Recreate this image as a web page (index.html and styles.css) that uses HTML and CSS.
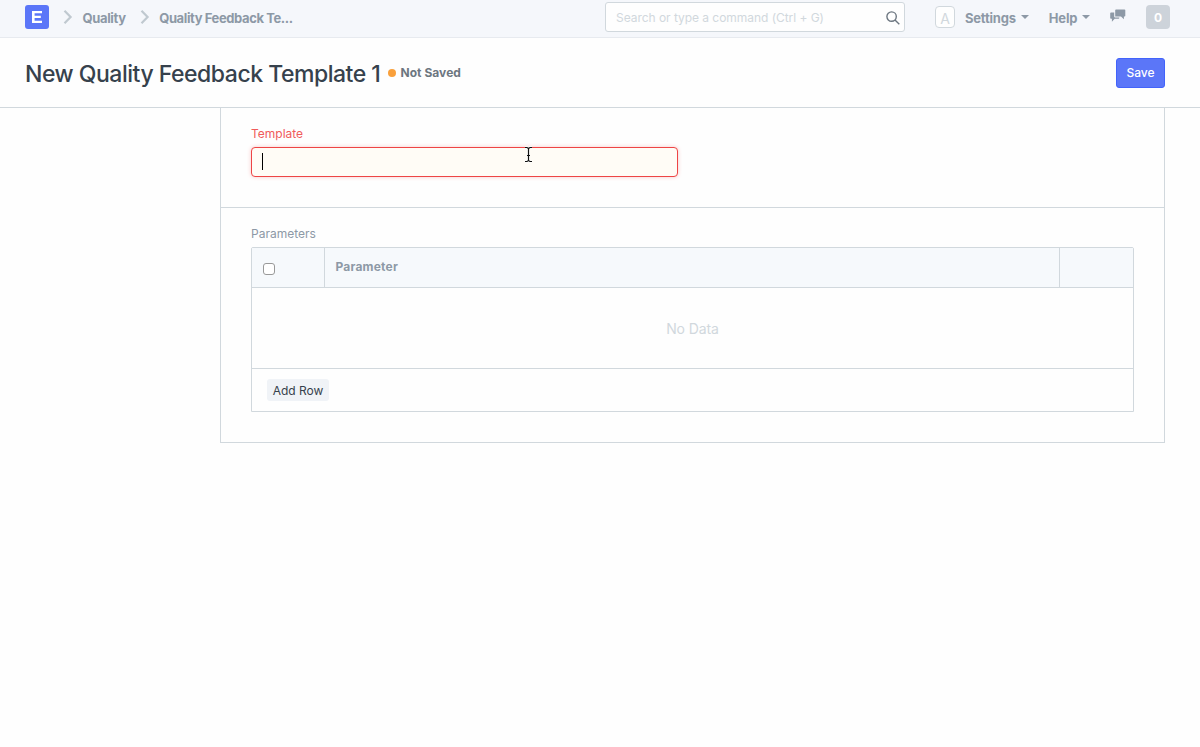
FILE: index.html
```html
<!DOCTYPE html>
<html lang="en">
<head>
<meta charset="utf-8">
<title>New Quality Feedback Template 1</title>
<link rel="stylesheet" href="styles.css">
</head>
<body>
<nav class="navbar">
  <div class="breadcrumbs">
    <a class="brand"><svg width="24" height="24" viewBox="0 0 24 24"><rect width="24" height="24" rx="3" fill="#5b76f8"/><path d="M7 6h10v2.300H9.600v2.500h6.200v2.300H9.600v2.600H17V18H7z" fill="#fff"/></svg></a>
    <svg class="chevron" width="10" height="16" viewBox="0 0 10 16"><path d="M1.500 1.800 7.600 8l-6.100 6.200"/></svg>
    <a class="crumb crumb-module">Quality</a>
    <svg class="chevron" width="10" height="16" viewBox="0 0 10 16"><path d="M1.500 1.800 7.600 8l-6.100 6.200"/></svg>
    <a class="crumb crumb-page">Quality Feedback Te...</a>
  </div>
  <div class="search">
    <span class="search-hint">Search or type a command (Ctrl + G)</span>
    <svg class="search-icon" width="14" height="14" viewBox="0 0 14 14"><circle cx="5.600" cy="5.600" r="4.700"/><path d="m9 9 4.300 4.300"/></svg>
  </div>
  <div class="tools">
    <span class="avatar">A</span>
    <a class="menu menu-settings">Settings</a><i class="caret"></i>
    <a class="menu menu-help">Help</a><i class="caret"></i>
    <svg class="chat" width="16" height="14" viewBox="0 0 16 14"><path d="M6 .5h8.500q.8 0 .8.8v5.400q0 .8-.8.8h-.6v2.800L11 7.500H5.200V1.300Q5.200.5 6 .5z"/><path d="M4.200 3.400H1q-.8 0-.8.8v4.700q0 .8.8.8h.9v3l2.800-3h3.800q.8 0 .8-.8v-.5H5.200q-1 0-1-1z"/></svg>
    <span class="count">0</span>
  </div>
</nav>
<header class="page-head">
  <h1 class="title">New Quality Feedback Template 1</h1>
  <i class="dot"></i>
  <span class="status">Not Saved</span>
  <button class="save">Save</button>
</header>
<main class="form">
  <section class="section">
    <label class="label label-required">Template</label>
    <div class="input"><i class="text-caret"></i>
      <svg class="pointer" width="9" height="17" viewBox="0 0 9 17"><path class="pointer-halo" d="M1 1.500h2l1.500 1L6 1.500h2M4.500 2v13M1 15.500h2l1.500-1 1.500 1h2M3 9.500h3"/><path class="pointer-line" d="M1 1.500h2l1.500 1L6 1.500h2M4.500 2v13M1 15.500h2l1.500-1 1.500 1h2M3 9.500h3"/></svg>
    </div>
  </section>
  <section class="section section-table">
    <label class="label label-table">Parameters</label>
    <div class="grid">
      <div class="grid-head">
        <div class="cell cell-check"><i class="checkbox"></i></div>
        <div class="cell cell-name"><span class="column-name">Parameter</span></div>
        <div class="cell cell-end"></div>
      </div>
      <div class="grid-empty"><span class="empty-text">No Data</span></div>
      <div class="grid-foot"><button class="add-row">Add Row</button></div>
    </div>
  </section>
</main>
</body>
</html>
```

FILE: styles.css
```css
* { box-sizing: border-box; }
body { margin: 0; height: 747px; overflow: hidden; background: #fefefe; font: 12px/18px Inter, "Liberation Sans", sans-serif; color: #36414c; }
svg { display: block; flex: none; }
button { font: inherit; margin: 0; padding: 0; white-space: nowrap; }
.navbar { display: flex; height: 38px; padding: 0 30px 4px 25px; align-items: center; background: #f5f7fb; border-bottom: 1px solid #e7eaef; color: #8d99a6; font-weight: 700; font-size: 13px; white-space: nowrap; }
.breadcrumbs { display: flex; align-items: center; width: 580px; }
.chevron { fill: none; stroke: #c0c9d0; stroke-width: 2.2; margin-left: 14px; }
.crumb { margin-left: 9.5px; padding-top: 2px; letter-spacing: -0.35px; }
.crumb-page { letter-spacing: -0.4px; }
.search { display: flex; align-items: center; justify-content: space-between; width: 300px; height: 30px; margin-top: 1px; padding: 0 4px 0 10px; background: #fefefe; border: 1px solid #d1d8dd; border-radius: 3px; }
.search-hint { padding-top: 2px; font-weight: 400; font-size: 12px; letter-spacing: -0.04px; color: #d1d8dd; }
.search-icon { fill: none; stroke: #6c7680; stroke-width: 1.4; margin-top: 2px; }
.tools { display: flex; align-items: center; margin-left: 30px; }
.avatar { width: 20px; height: 22px; border: 1px solid #d1d8dd; border-radius: 4px; background: #fefefe; color: #d1d8dd; font-weight: 400; font-size: 14px; line-height: 23px; text-align: center; }
.menu { margin-left: 10px; padding-top: 2px; letter-spacing: -0.2px; }
.menu-help { margin-left: 20px; }
.caret { border: 4px solid transparent; border-top-color: #8d99a6; border-bottom: 0; margin-left: 5px; }
.chat { fill: #8d99a6; margin-left: 20px; margin-top: -1px; }
.count { width: 24px; height: 24px; margin-left: auto; border-radius: 4px; background: #cdd3da; color: #fff; text-align: center; line-height: 26px; font-size: 12px; }
.tools { width: 235px; }
.page-head { display: flex; align-items: center; height: 70px; padding: 0 35px 0 25px; border-bottom: 1px solid #d1d8dd; background: #fefefe; }
.title { margin: 3px 0 0; font-size: 23px; line-height: 30px; font-weight: 500; letter-spacing: -0.48px; white-space: nowrap; }
.dot { width: 8px; height: 8px; margin-left: 8px; margin-top: 1px; border-radius: 50%; background: #f9a03c; }
.status { margin-left: 4px; font-weight: 700; letter-spacing: 0.05px; color: #6c7680; }
.save { width: 49px; height: 30px; margin-left: auto; margin-top: 1px; border: 1px solid #4263fb; border-radius: 3px; background: #5b76f8; color: #fff; font-weight: 500; }
.form { width: 945px; height: 335px; margin-left: 220px; border: solid #d1d8dd; border-width: 0 1px 1px; }
.section { height: 100px; padding: 17px 30px 0; border-bottom: 1px solid #d1d8dd; }
.section-table { height: auto; border: 0; }
.label { display: block; width: max-content; color: #8d99a6; }
.label-required { color: #f05b5b; }
.input { position: relative; display: flex; align-items: center; width: 427px; height: 30px; margin-top: 4px; padding-left: 10px; border: 1px solid #ee4545; border-radius: 4px; background: #fffcf6; box-shadow: 0 0 4px #f8c9c9; }
.text-caret { width: 1px; height: 17px; margin-bottom: 2px; background: #000; }
.pointer { position: absolute; left: 272px; top: -2px; fill: none; }
.pointer-halo { stroke: #fff; stroke-width: 2.5; }
.pointer-line { stroke: #111; stroke-width: 1.2; }
.grid { height: 165px; margin-top: 4px; border: 1px solid #d1d8dd; border-radius: 2px 2px 0 0; }
.grid-head { display: flex; height: 40px; border-bottom: 1px solid #d1d8dd; background: #f6f9fc; }
.cell-check { width: 73px; padding: 15px 11px 0; border-right: 1px solid #d1d8dd; }
.checkbox { display: block; width: 12px; height: 12px; border: 1px solid #999; border-radius: 3px; background: #fff; }
.cell-name { flex: 1; padding: 10px 10.5px; color: #8d99a6; font-weight: 700; letter-spacing: 0.2px; }
.cell-end { width: 74px; border-left: 1px solid #d1d8dd; }
.grid-empty { display: flex; align-items: center; justify-content: center; height: 81px; padding-top: 2px; border-bottom: 1px solid #d1d8dd; color: #d1d8dd; font-size: 14px; letter-spacing: -0.1px; }
.grid-foot { padding: 10px 15px; }
.add-row { display: block; width: 62px; height: 22px; padding-top: 2px; border: 0; border-radius: 3px; background: #f0f3f7; color: #36414c; }
```
